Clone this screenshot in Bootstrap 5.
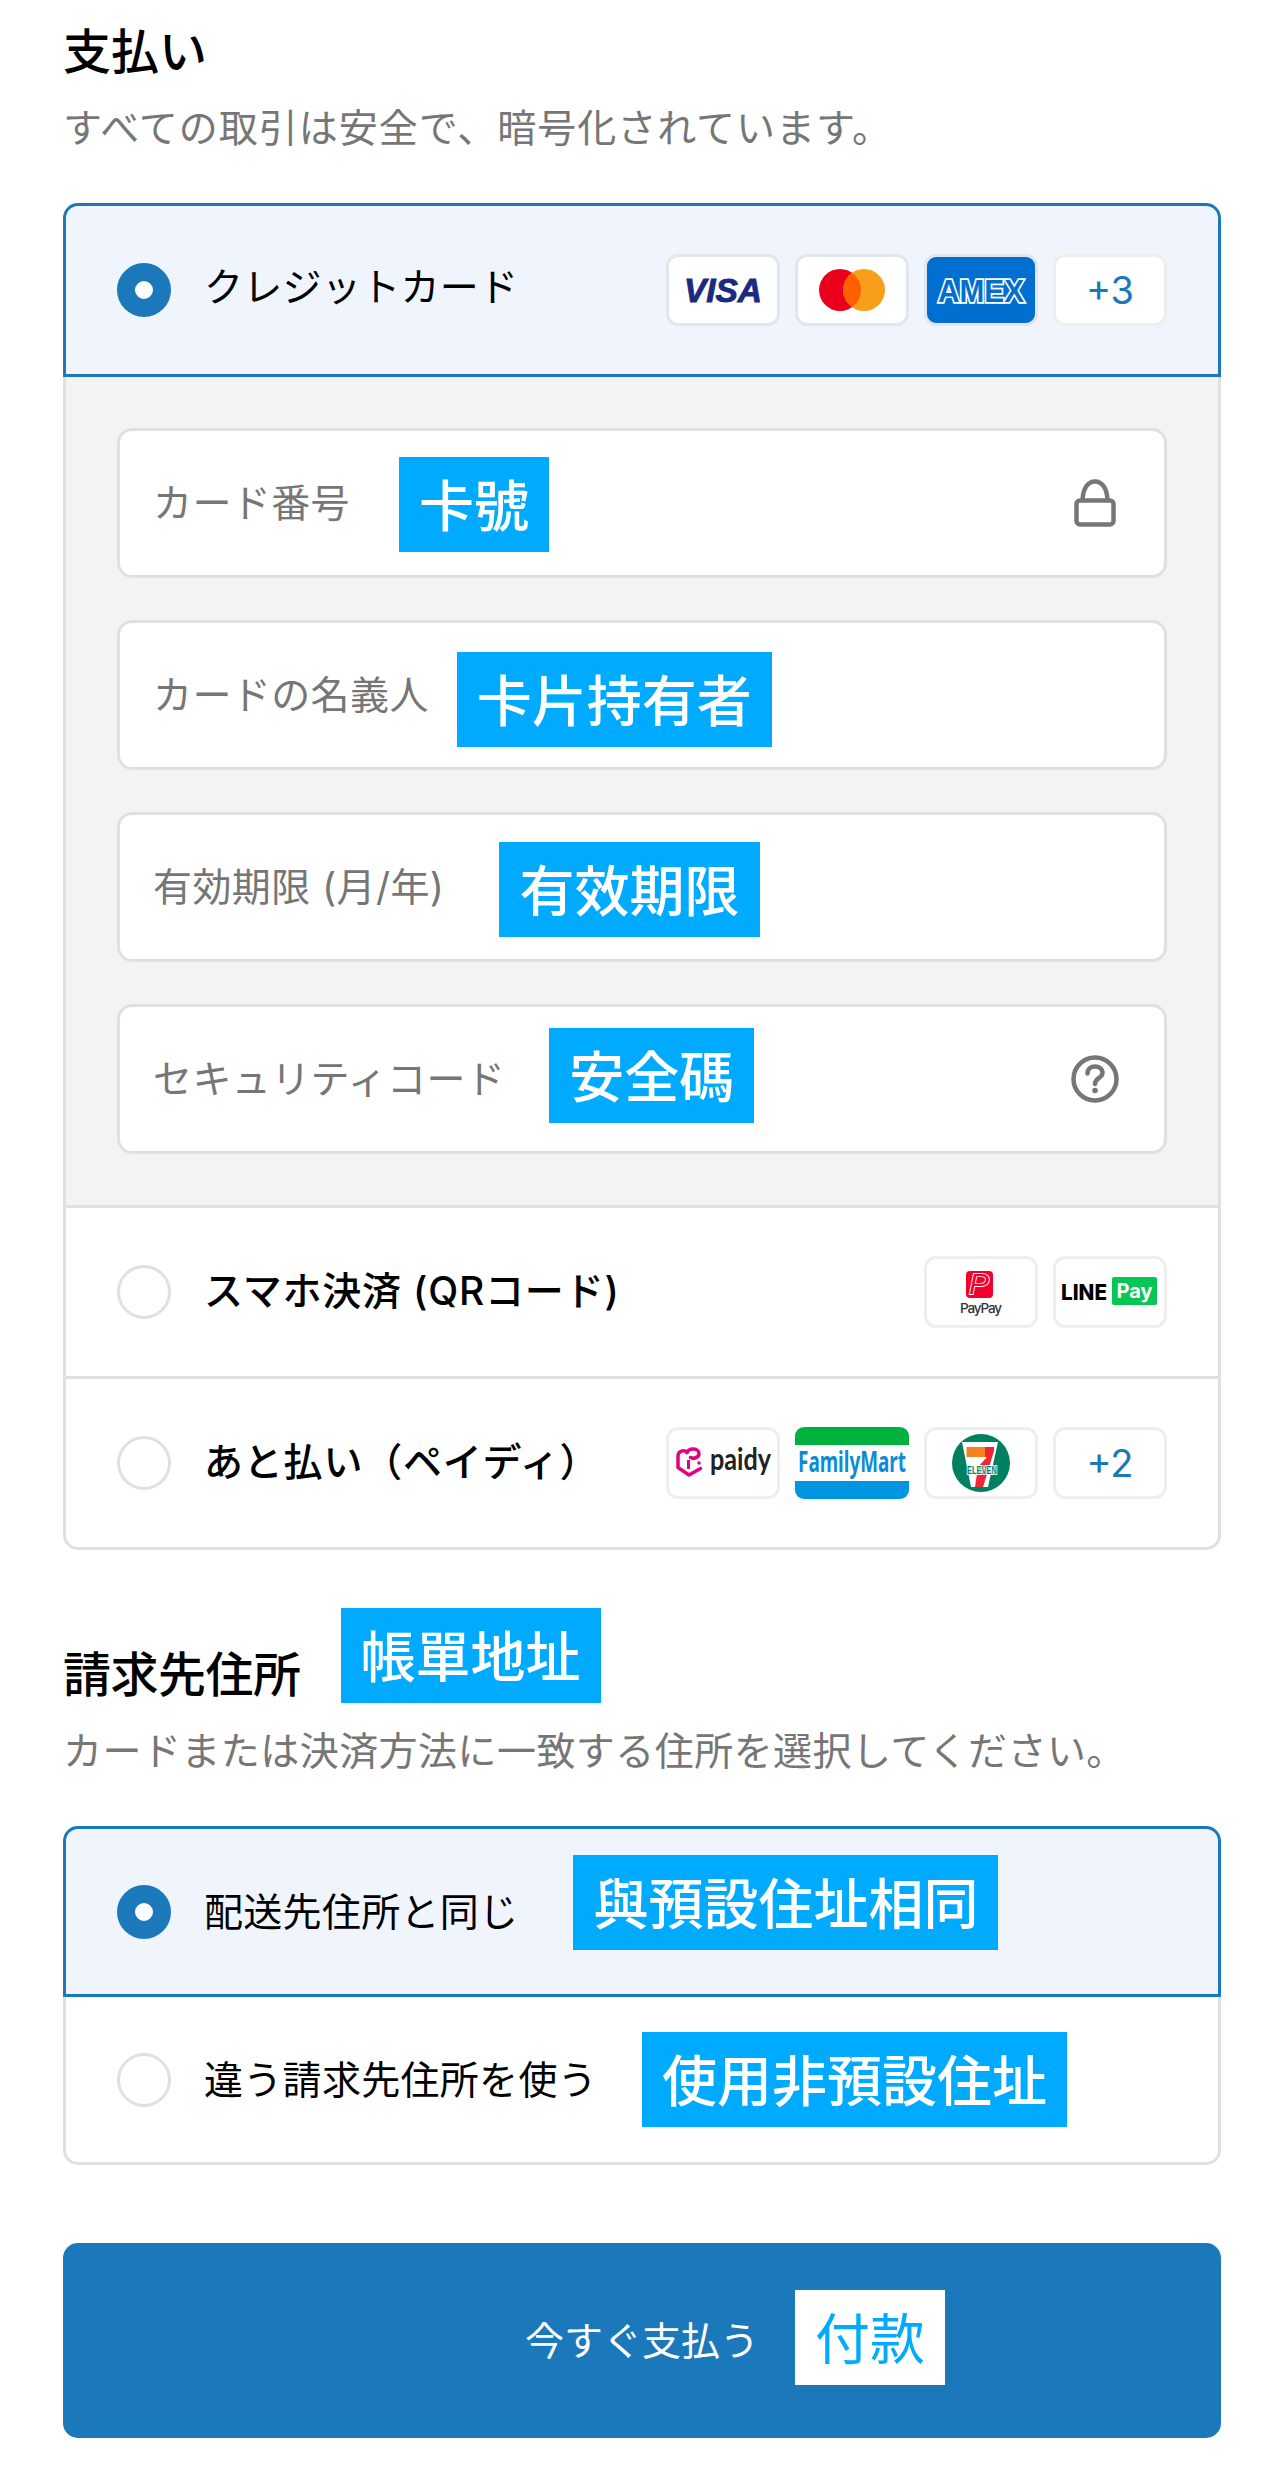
<!DOCTYPE html>
<html lang="ja">
<head>
<meta charset="utf-8">
<title>支払い</title>
<link href="https://cdn.jsdelivr.net/npm/bootstrap@5.3.0/dist/css/bootstrap.min.css" rel="stylesheet">
<style>
html,body{background:#fff;}
body{font-family:"Inter","Noto Sans CJK JP",sans-serif;color:#000;}
.page-wrap{padding:20px 63px 33px;}
.sec-title{font-size:48px;line-height:64px;font-weight:500;margin:0;}
.sec-sub{font-size:39px;line-height:54px;color:#767676;margin:17px 0 48px;}
.sub-a{letter-spacing:1px;}
.sub-b{letter-spacing:.45px;}
.sec-title-wrap{margin-top:58px;}
.sec-title-wrap .sec-title{margin-top:35px;letter-spacing:-.5px;}
.sec-title-wrap .note{margin-left:40px;}
.note{font-family:"Noto Sans CJK TC","Noto Sans CJK JP",sans-serif;font-size:55px;font-weight:500;line-height:91px;height:95px;padding:0 20px;background:#00aaff;color:#fff;white-space:nowrap;flex:none;letter-spacing:0;}
.pay-group{border-radius:15px;}
.pay-group .list-group-item{border:3px solid #e0e0e0;border-top-width:0;padding:0 51px;background:#fff;color:#000;}
.pay-group .list-group-item:first-child{border-top-width:3px;border-radius:15px 15px 0 0;}
.pay-group .list-group-item:last-child{border-radius:0 0 15px 15px;}
.pay-group .list-group-item.pick{background:#f0f5fd;border-color:#1a78bb;}
.pay-group .list-group-item.panel-area{background:#f3f3f3;padding-top:51px;padding-bottom:51px;}
.h-174{height:174px;}.h-171{height:171px;}.h-168{height:168px;}
.dot{width:54px;height:54px;border-radius:50%;border:3px solid #e0e0e0;background:#fff;flex:none;margin-right:33px;}
.dot.on{border:18px solid #1a78bb;}
.opt-label{font-size:39px;line-height:54px;white-space:nowrap;letter-spacing:.3px;}
.opt-label.lift{margin-top:-6px;}
.opt-label.strong{font-weight:500;letter-spacing:.8px;margin-top:-3px;}
.tiles{gap:15px;}
.tile{width:114px;height:72px;flex:none;background:#fff;border:3px solid #eee;border-radius:12px;}
.tile svg{display:block;width:108px;height:66px;overflow:visible;}
.tile.edge{border-color:#e1e6ef;}
.tile.amex{background:#006fcf;}
.tile.bare{border:0;border-radius:9px;}
.tile.bare svg{width:114px;height:72px;}
.tile-more{font-size:38px;color:#1a78bb;line-height:66px;text-align:center;}
.field-box{height:150px;background:#fff;border:3px solid #e0e0e0;border-radius:15px;padding:0 33px;color:#767676;font-size:39px;line-height:54px;white-space:nowrap;letter-spacing:.4px;}
.field-list{gap:42px;}
.field-ico{width:54px;height:54px;margin-left:auto;margin-right:9px;flex:none;}
.n1{margin:3px 0 0 49px;}.n2{margin:9px 0 0 28px;}.n3{margin:5px 0 0 55px;}.n4{margin:-7px 0 0 44px;}
.n5{margin:-19px 0 0 55px;}.n6{margin:-1px 0 0 45px;}
.pay-btn{display:flex;align-items:center;justify-content:center;width:100%;height:195px;margin-top:78px;background:#1a78bb;border:0;border-radius:15px;color:#fff;font-size:39px;line-height:54px;padding:0;}
.pay-btn:hover,.pay-btn:active{background:#1a78bb;color:#fff;}
.note.inv{background:#fff;color:#00aaff;margin:-6px -186px 0 36px;font-weight:400;}
</style>
</head>
<body>
<div class="page-wrap">
  <h2 class="sec-title">支払い</h2>
  <p class="sec-sub sub-a">すべての取引は安全で、暗号化されています。</p>

  <div class="list-group pay-group">
    <div class="list-group-item pick h-174 d-flex align-items-center">
      <span class="dot on"></span>
      <span class="opt-label lift">クレジットカード</span>
      <div class="d-flex tiles ms-auto">
        <div class="tile edge"><svg viewBox="0 0 108 66"><text x="54" y="44.500" text-anchor="middle" font-family="Liberation Sans" font-weight="700" font-style="italic" font-size="33" textLength="78" lengthAdjust="spacingAndGlyphs" fill="#1a2a80" stroke="#1a2a80" stroke-width=".9">VISA</text></svg></div>
        <div class="tile edge"><svg viewBox="0 0 108 66"><circle cx="42" cy="33" r="21" fill="#eb001b"/><circle cx="66" cy="33" r="21" fill="#f79e1b"/><path d="M54 15.8A21 21 0 0 1 54 50.2A21 21 0 0 1 54 15.8Z" fill="#ff5f00"/></svg></div>
        <div class="tile edge amex"><svg viewBox="0 0 108 66"><text x="54" y="44.500" text-anchor="middle" font-family="Liberation Sans" font-weight="700" font-size="31" textLength="86" lengthAdjust="spacingAndGlyphs" fill="#006fcf" stroke="#fff" stroke-width="3.400" stroke-linejoin="miter" paint-order="stroke">AMEX</text></svg></div>
        <div class="tile tile-more">+3</div>
      </div>
    </div>

    <div class="list-group-item panel-area">
      <div class="d-flex flex-column field-list">
        <div class="field-box d-flex align-items-center"><span>カード番号</span><span class="note n1">卡號</span>
          <svg class="field-ico" viewBox="0 0 54 54" fill="none" stroke="#767676" stroke-width="4.500"><path d="M14.500 24C15 12 20 5.500 27 5.500S39 12 39.500 24"/><rect x="8.500" y="24.500" width="37" height="24" rx="3.500"/></svg></div>
        <div class="field-box d-flex align-items-center"><span>カードの名義人</span><span class="note n2">卡片持有者</span></div>
        <div class="field-box d-flex align-items-center"><span>有効期限 (月/年)</span><span class="note n3">有效期限</span></div>
        <div class="field-box d-flex align-items-center"><span>セキュリティコード</span><span class="note n4">安全碼</span>
          <svg class="field-ico" viewBox="0 0 54 54" fill="none" stroke="#767676" stroke-width="4.500"><circle cx="27" cy="27" r="21.500"/><path d="M19.500 21.500C19.500 17 23 14.500 27 14.500S34.500 17 34.500 21C34.500 26 27 26 27 32" stroke-linecap="round"/><circle cx="27" cy="38.500" r="2.800" fill="#767676" stroke="none"/></svg></div>
      </div>
    </div>

    <div class="list-group-item h-171 d-flex align-items-center">
      <span class="dot"></span>
      <span class="opt-label strong">スマホ決済 (QRコード)</span>
      <div class="d-flex tiles ms-auto">
        <div class="tile"><svg viewBox="0 0 108 66"><rect x="39" y="12" width="27" height="27" rx="4" fill="#f5002d"/><text x="52" y="35" text-anchor="middle" font-family="Liberation Sans" font-weight="400" font-style="italic" font-size="30" fill="#f5002d" stroke="#fff" stroke-width="1.800" paint-order="stroke">P</text><text x="54" y="54" text-anchor="middle" font-family="Inter" font-weight="500" font-size="13.500" textLength="42" fill="#333">PayPay</text></svg></div>
        <div class="tile"><svg viewBox="0 0 108 66"><text x="5" y="41" font-family="Inter" font-weight="800" font-size="21.500" textLength="46" lengthAdjust="spacingAndGlyphs" fill="#000">LINE</text><rect x="56" y="18" width="45" height="28" rx="2" fill="#06c755"/><text x="78.500" y="39" text-anchor="middle" font-family="Inter" font-weight="700" font-size="20" fill="#fff">Pay</text></svg></div>
      </div>
    </div>

    <div class="list-group-item h-171 d-flex align-items-center">
      <span class="dot"></span>
      <span class="opt-label strong">あと払い（ペイディ）</span>
      <div class="d-flex tiles ms-auto">
        <div class="tile"><svg viewBox="0 0 108 66"><path d="M18 22.500C15 19 9 21 9 26V37.500L20 45L31.500 38.500" fill="none" stroke="#e6007e" stroke-width="3.500" stroke-linejoin="round" stroke-linecap="round"/><path d="M18 22.500C20 17.500 30 18 30 23.500C30 28 24 29 21.500 27.500" fill="none" stroke="#e6007e" stroke-width="3.500" stroke-linecap="round"/><path d="M19.500 30V39" stroke="#e6007e" stroke-width="3"/><circle cx="30" cy="33" r="1.800" fill="#e6007e"/><text x="41" y="40" font-family="Lato" font-weight="700" font-size="30" textLength="61" lengthAdjust="spacingAndGlyphs" fill="#222">paidy</text></svg></div>
        <div class="tile bare"><svg viewBox="0 0 114 72"><path d="M0 18V9A9 9 0 0 1 9 0H105A9 9 0 0 1 114 9V18Z" fill="#00b140"/><path d="M0 54V63A9 9 0 0 0 9 72H105A9 9 0 0 0 114 63V54Z" fill="#0095e0"/><text x="57" y="45" text-anchor="middle" font-family="Noto Sans" font-weight="700" font-size="28" textLength="108" lengthAdjust="spacingAndGlyphs" fill="#0b8bd9">FamilyMart</text></svg></div>
        <div class="tile"><svg viewBox="0 0 108 66"><circle cx="54" cy="33" r="29" fill="#008060"/><path d="M35 12H71L61 57H44Z" fill="#fff"/><rect x="39.500" y="17" width="19" height="10" fill="#f58220"/><path d="M58 17H67V21L56 57H48L51 37L60 27H58Z" fill="#ee2737"/><text x="55" y="43.500" text-anchor="middle" font-family="Liberation Sans" font-weight="700" font-size="11" textLength="30" lengthAdjust="spacingAndGlyphs" fill="#008060" stroke="#fff" stroke-width="2" paint-order="stroke">ELEVEN</text></svg></div>
        <div class="tile tile-more">+2</div>
      </div>
    </div>
  </div>

  <div class="d-flex align-items-start sec-title-wrap">
    <h2 class="sec-title">請求先住所</h2><span class="note">帳單地址</span>
  </div>
  <p class="sec-sub sub-b">カードまたは決済方法に一致する住所を選択してください。</p>

  <div class="list-group pay-group">
    <div class="list-group-item pick h-171 d-flex align-items-center">
      <span class="dot on"></span>
      <span class="opt-label">配送先住所と同じ</span><span class="note n5">與預設住址相同</span>
    </div>
    <div class="list-group-item h-168 d-flex align-items-center">
      <span class="dot"></span>
      <span class="opt-label">違う請求先住所を使う</span><span class="note n6">使用非預設住址</span>
    </div>
  </div>

  <button type="button" class="btn pay-btn"><span>今すぐ支払う</span><span class="note inv">付款</span></button>
</div>
<script src="https://cdn.jsdelivr.net/npm/bootstrap@5.3.0/dist/js/bootstrap.bundle.min.js"></script>
</body>
</html>
